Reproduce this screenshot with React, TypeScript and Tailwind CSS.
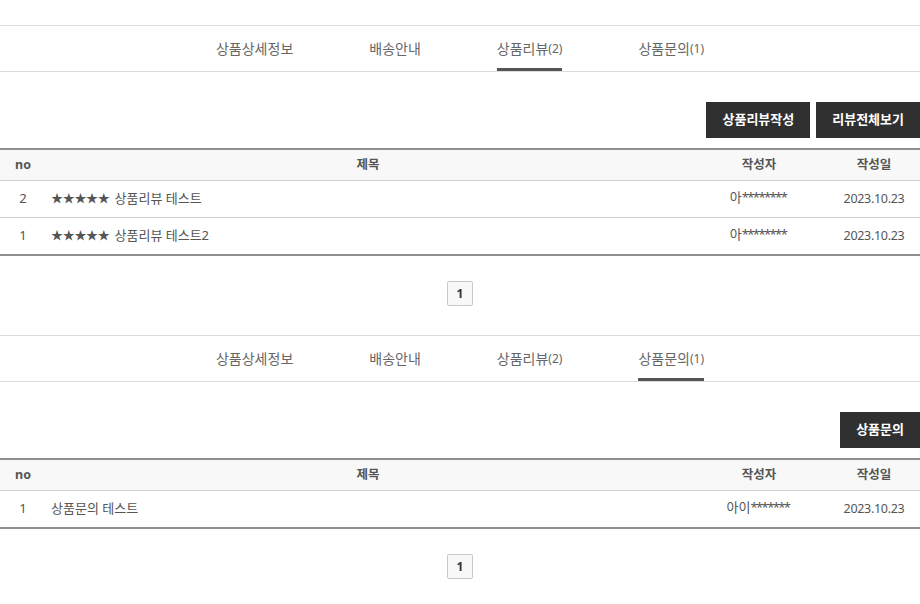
import React from "react";

const font = { fontFamily: '"Noto Sans", "Noto Sans CJK KR", sans-serif' };

function Tabs({ active }: { active: number }) {
  const tabs = [
    { label: "상품상세정보", count: "" },
    { label: "배송안내", count: "" },
    { label: "상품리뷰", count: "(2)" },
    { label: "상품문의", count: "(1)" },
  ];
  return (
    <div className="h-[47px] border-t border-b border-[#dcdcdc] flex justify-center gap-[76px]">
      {tabs.map((t, i) => (
        <div
          key={i}
          className={`flex items-center h-full text-[14px] text-[#666] ${
            i === active ? "border-b-[3px] border-[#555] pt-[3px] mb-[-1px]" : ""
          }`}
        >
          <span>{t.label}</span>
          {t.count && <span className="text-[12px]">{t.count}</span>}
        </div>
      ))}
    </div>
  );
}

type Row = { no: number; title: string; stars?: boolean; name: string; mask: string; date: string };

function Board({ rows }: { rows: Row[] }) {
  return (
    <div className="border-t-2 border-b-2 border-[#8f8f8f] text-[13px] text-[#555]">
      <div className="flex h-[30px] items-center bg-[#f8f8f8] font-bold text-[#555] text-[12.5px]">
        <div className="w-[46px] text-center">no</div>
        <div className="flex-1 text-center">제목</div>
        <div className="w-[138px] text-center">작성자</div>
        <div className="w-[92px] text-center">작성일</div>
      </div>
      {rows.map((r, i) => (
        <div key={i} className="flex h-[37px] items-center border-t border-[#cfcfcf]">
          <div className="w-[46px] text-center">{r.no}</div>
          <div className="flex-1 pl-[5px]">
            {r.stars && <span className="text-[12px] text-[#555] mr-[5px] tracking-[-0.3px]">★★★★★</span>}
            {r.title}
          </div>
          <div className="w-[138px] text-center pb-[3px]">
            {r.name}
            <span className="tracking-[-1.6px] pr-[2px]">{r.mask}</span>
          </div>
          <div className="w-[92px] text-center text-[12.5px] tracking-[-0.3px]">{r.date}</div>
        </div>
      ))}
    </div>
  );
}

function Pager() {
  return (
    <div className="flex justify-center pt-[25px]">
      <div className="w-[26px] h-[25px] border border-[#c8c8c8] rounded-[2px] bg-[#f8f8f8] flex items-center justify-center text-[12px] font-bold text-[#333]">
        1
      </div>
    </div>
  );
}

function Btn({ children }: { children: React.ReactNode }) {
  return (
    <div className="h-[36px] px-[16px] bg-[#303030] text-white text-[13px] font-bold flex items-center justify-center">
      {children}
    </div>
  );
}

export default function App() {
  return (
    <div className="w-[920px] h-[604px] bg-white overflow-hidden" style={font}>
      <div className="pt-[25px]">
        <Tabs active={2} />
      </div>
      <div className="flex justify-end gap-[6px] pt-[30px] pb-[10px]">
        <Btn>상품리뷰작성</Btn>
        <Btn>리뷰전체보기</Btn>
      </div>
      <Board
        rows={[
          { no: 2, title: "상품리뷰 테스트", stars: true, name: "아", mask: "********", date: "2023.10.23" },
          { no: 1, title: "상품리뷰 테스트2", stars: true, name: "아", mask: "********", date: "2023.10.23" },
        ]}
      />
      <Pager />
      <div className="pt-[29px]">
        <Tabs active={3} />
      </div>
      <div className="flex justify-end pt-[30px] pb-[10px]">
        <Btn>상품문의</Btn>
      </div>
      <Board rows={[{ no: 1, title: "상품문의 테스트", name: "아이", mask: "*******", date: "2023.10.23" }]} />
      <Pager />
    </div>
  );
}
